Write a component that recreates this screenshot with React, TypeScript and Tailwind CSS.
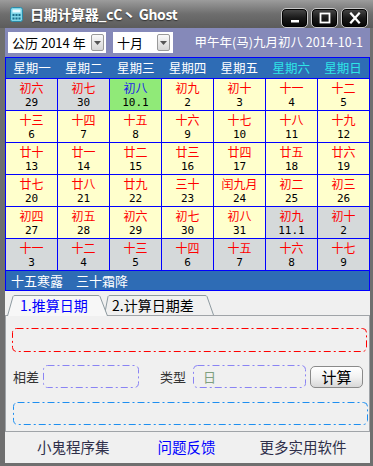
import React from 'react'

type Cell = { l: string; d: string; k: 'y' | 'g' | 't' }

const ROWS: Cell[][] = [
  [
    { l: '初六', d: '29', k: 'g' },
    { l: '初七', d: '30', k: 'g' },
    { l: '初八', d: '10.1', k: 't' },
    { l: '初九', d: '2', k: 'y' },
    { l: '初十', d: '3', k: 'y' },
    { l: '十一', d: '4', k: 'y' },
    { l: '十二', d: '5', k: 'y' },
  ],
  [
    { l: '十三', d: '6', k: 'y' },
    { l: '十四', d: '7', k: 'y' },
    { l: '十五', d: '8', k: 'y' },
    { l: '十六', d: '9', k: 'y' },
    { l: '十七', d: '10', k: 'y' },
    { l: '十八', d: '11', k: 'y' },
    { l: '十九', d: '12', k: 'y' },
  ],
  [
    { l: '廿十', d: '13', k: 'y' },
    { l: '廿一', d: '14', k: 'y' },
    { l: '廿二', d: '15', k: 'y' },
    { l: '廿三', d: '16', k: 'y' },
    { l: '廿四', d: '17', k: 'y' },
    { l: '廿五', d: '18', k: 'y' },
    { l: '廿六', d: '19', k: 'y' },
  ],
  [
    { l: '廿七', d: '20', k: 'y' },
    { l: '廿八', d: '21', k: 'y' },
    { l: '廿九', d: '22', k: 'y' },
    { l: '三十', d: '23', k: 'y' },
    { l: '闰九月', d: '24', k: 'y' },
    { l: '初二', d: '25', k: 'y' },
    { l: '初三', d: '26', k: 'y' },
  ],
  [
    { l: '初四', d: '27', k: 'y' },
    { l: '初五', d: '28', k: 'y' },
    { l: '初六', d: '29', k: 'y' },
    { l: '初七', d: '30', k: 'y' },
    { l: '初八', d: '31', k: 'y' },
    { l: '初九', d: '11.1', k: 'g' },
    { l: '初十', d: '2', k: 'g' },
  ],
  [
    { l: '十一', d: '3', k: 'g' },
    { l: '十二', d: '4', k: 'g' },
    { l: '十三', d: '5', k: 'g' },
    { l: '十四', d: '6', k: 'g' },
    { l: '十五', d: '7', k: 'g' },
    { l: '十六', d: '8', k: 'g' },
    { l: '十七', d: '9', k: 'g' },
  ],
]

const WEEK = ['星期一', '星期二', '星期三', '星期四', '星期五', '星期六', '星期日']

const CELL_BG: Record<string, string> = {
  y: 'bg-[#ffffcc]',
  g: 'bg-[#d5d9da]',
  t: 'bg-[#90ea78]',
}

// box with dash-dot outline
function DashBox({ w, h, color, children }: { w: number; h: number; color: string; children?: React.ReactNode }) {
  return (
    <div className="relative" style={{ width: w, height: h }}>
      <svg className="absolute inset-0" width={w} height={h}>
        <rect
          x={0.5}
          y={0.5}
          width={w - 1}
          height={h - 1}
          rx={4}
          fill="none"
          stroke={color}
          strokeWidth={1}
          strokeDasharray="7 3 2 3"
        />
      </svg>
      <div className="relative flex h-full items-center px-[10px]">{children}</div>
    </div>
  )
}

function WinButton({ kind }: { kind: 'min' | 'max' | 'close' }) {
  return (
    <div className="flex h-[20px] w-[27px] items-center justify-center rounded-[5px] border border-[#c8c8c8] bg-gradient-to-b from-[#4a4a4a] via-[#1a1a1a] to-[#050505] shadow-[inset_0_0_0_1px_#000]">
      <svg width="14" height="12" viewBox="0 0 14 12">
        {kind === 'min' && <rect x="3" y="8" width="8" height="2.5" fill="#fff" />}
        {kind === 'max' && <rect x="2.5" y="1.5" width="9" height="9" fill="none" stroke="#fff" strokeWidth="1.8" />}
        {kind === 'close' && (
          <path d="M3 1.5 L11 10.5 M11 1.5 L3 10.5" stroke="#fff" strokeWidth="2.2" strokeLinecap="square" />
        )}
      </svg>
    </div>
  )
}

function DropBtn() {
  return (
    <div className="flex h-[17px] w-[13px] items-center justify-center rounded-[2px] border border-[#9a9a9a] bg-gradient-to-b from-[#fafafa] to-[#d6d6d6]">
      <svg width="7" height="4" viewBox="0 0 7 4">
        <path d="M0 0 L7 0 L3.5 4 Z" fill="#555" />
      </svg>
    </div>
  )
}

export default function App() {
  return (
    <div
      className="flex h-[466px] w-[373px] flex-col overflow-hidden bg-[#6f6f6f]"
      style={{ fontFamily: '"Noto Sans CJK SC", "Noto Sans", sans-serif' }}
    >
      {/* 标题栏 */}
      <div className="flex h-[28px] items-center bg-gradient-to-b from-[#9c9c9c] via-[#6e6e6e] to-[#5c5c5c] pl-[10px] pr-[5px]">
        <svg width="13" height="15" viewBox="0 0 13 15" className="mt-[1px]">
          <rect x="0.5" y="0.5" width="12" height="14" rx="2" fill="#7fd6e8" stroke="#2a8aa8" />
          <rect x="2.5" y="2.5" width="8" height="3" fill="#e8fbff" />
          <rect x="2.5" y="7" width="2" height="2" fill="#1d6f8a" />
          <rect x="5.5" y="7" width="2" height="2" fill="#1d6f8a" />
          <rect x="8.5" y="7" width="2" height="2" fill="#1d6f8a" />
          <rect x="2.5" y="10.5" width="2" height="2" fill="#1d6f8a" />
          <rect x="5.5" y="10.5" width="2" height="2" fill="#1d6f8a" />
          <rect x="8.5" y="10.5" width="2" height="2" fill="#1d6f8a" />
        </svg>
        <span className="ml-[7px] text-[14px] font-bold leading-none tracking-[-0.3px] text-white [text-shadow:0_1px_1px_#333]">
          日期计算器_cC丶 Ghost
        </span>
        <div className="ml-auto mt-[8px] flex gap-[3px]">
          <WinButton kind="min" />
          <WinButton kind="max" />
          <WinButton kind="close" />
        </div>
      </div>

      <div className="ml-[5px] mr-[3px] flex flex-1 flex-col">
        {/* 工具栏 */}
        <div className="flex h-[29px] items-center bg-[#8589b9] pl-[3px] pr-[7px]">
          <div className="flex h-[21px] w-[98px] items-center bg-white pl-[4px] pr-[2px] text-[13px] text-black">
            <span className="leading-none">公历 2014 年</span>
            <div className="ml-auto">
              <DropBtn />
            </div>
          </div>
          <div className="ml-[7px] flex h-[21px] w-[60px] items-center bg-white pl-[4px] pr-[3px] text-[13px] text-black">
            <span className="leading-none">十月</span>
            <div className="ml-auto">
              <DropBtn />
            </div>
          </div>
          <span className="ml-auto text-[12.5px] leading-none text-white">甲午年(马)九月初八 2014-10-1</span>
        </div>

        {/* 日历 */}
        <div className="border border-[#0000ff] bg-[#0000ff]">
          <div className="grid h-[20px] grid-cols-7 bg-[#2e6cb5]">
            {WEEK.map((w, i) => (
              <div
                key={w}
                className={`flex items-center justify-center text-[12.5px] leading-none ${i >= 5 ? 'text-[#2ee6e6]' : 'text-white'}`}
              >
                {w}
              </div>
            ))}
          </div>
          <div className="mt-px grid grid-cols-7 gap-px">
            {ROWS.flat().map((c, i) => (
              <div key={i} className={`flex h-[31px] flex-col items-center pt-[2px] ${CELL_BG[c.k]}`}>
                <div className={`h-[13px] text-[12px] leading-[13px] ${c.k === 't' ? 'text-[#1c1ce6]' : 'text-[#ff0000]'}`}>
                  {c.l}
                </div>
                <div
                  className="mt-[3px] h-[12px] text-[11px] leading-[12px] text-black"
                  style={{ fontFamily: '"DejaVu Sans Mono", monospace' }}
                >
                  {c.d}
                </div>
              </div>
            ))}
          </div>
          <div className="mt-px flex h-[19px] items-center bg-[#2e6cb5] pl-[5px] text-[13px] leading-none text-white">
            十五寒露　三十霜降
          </div>
        </div>

        {/* 选项卡区域 */}
        <div className="flex flex-1 flex-col bg-[#f0f0f0]">
          <div className="mt-[4px] flex h-[20px] pl-[2px]">
            <div className="relative z-10 flex h-[20px] w-[101px] items-center">
              <svg className="absolute inset-0" width="101" height="21" viewBox="0 0 101 21">
                <path d="M0.5 21 L6 1.5 Q6.5 0.5 8 0.5 L91 0.5 Q92.5 0.5 93 1.5 L100.5 21" fill="#f7f7f7" stroke="#8e9aa0" />
              </svg>
              <span className="relative ml-[13px] text-[14px] leading-none text-[#0000ff]">1.推算日期</span>
            </div>
            <div className="relative -ml-[4px] flex h-[20px] w-[110px] items-center">
              <svg className="absolute inset-0" width="110" height="20" viewBox="0 0 110 20">
                <path d="M0.5 20 L4 1.5 Q4.5 0.5 6 0.5 L101 0.5 Q102.5 0.5 103 1.5 L109.5 20" fill="#f0f0f0" stroke="#8e9aa0" />
              </svg>
              <span className="relative ml-[8px] text-[14px] leading-none text-black">2.计算日期差</span>
            </div>
          </div>
          <div className="flex h-[117px] flex-col border border-[#a0a4a8] bg-[#f0f0f0]">
            <div className="ml-[6px] mt-[12px]">
              <DashBox w={355} h={24} color="#ff0000" />
            </div>
            <div className="mt-[13px] flex h-[23px] items-center">
              <span className="ml-[7px] text-[13px] leading-none text-[#333]">相差</span>
              <div className="ml-[4px]">
                <DashBox w={96} h={23} color="#8a84f4" />
              </div>
              <span className="ml-[21px] text-[13px] leading-none text-[#333]">类型</span>
              <div className="ml-[7px]">
                <DashBox w={113} h={23} color="#8a84f4">
                  <span className="text-[13px] leading-none text-[#7fa07f]">日</span>
                </DashBox>
              </div>
              <div className="ml-[4px] flex h-[22px] w-[53px] items-center justify-center rounded-[5px] border border-[#8a8a8a] bg-gradient-to-b from-[#ffffff] via-[#f2f2f2] to-[#d8d8d8] text-[15px] leading-none text-black">
                计算
              </div>
            </div>
            <div className="ml-[7px] mt-[14px]">
              <DashBox w={355} h={23} color="#1e8ff0" />
            </div>
          </div>
          <div className="flex flex-1 items-center text-[14.5px] leading-none text-[#2f2f4a]">
            <span className="ml-[32px]">小鬼程序集</span>
            <span className="ml-[48px] text-[#0000ff]">问题反馈</span>
            <span className="ml-[44px]">更多实用软件</span>
          </div>
        </div>
      </div>
      <div className="h-[3px]" />
    </div>
  )
}
